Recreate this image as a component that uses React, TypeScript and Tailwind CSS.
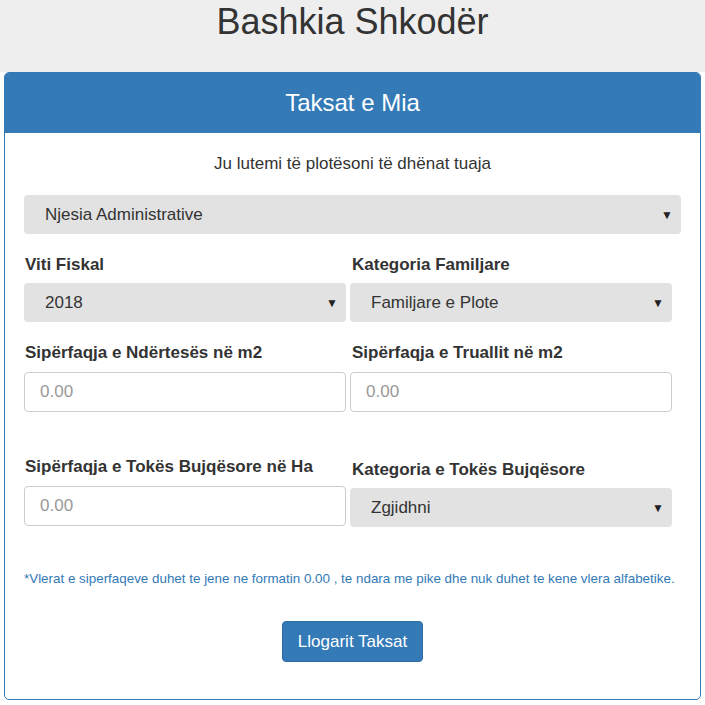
export default function App() {
  const font = { fontFamily: '"Liberation Sans", Arial, sans-serif' };

  const Select = ({ text, wide }: { text: string; wide?: boolean }) => (
    <div
      className={`flex items-center justify-between h-[39px] rounded-[4px] bg-[#e2e2e2] pl-[21px] pr-[8px] text-[17px] text-[#333] ${
        wide ? "w-[657px]" : "w-[322px]"
      }`}
    >
      <span>{text}</span>
      <span className="text-[12px] text-[#222]">▼</span>
    </div>
  );

  const Input = () => (
    <div className="flex items-center h-[40px] w-[322px] rounded-[4px] border border-[#cccccc] bg-white pl-[15px] text-[17px] text-[#999]">
      0.00
    </div>
  );

  const Label = ({ text }: { text: string }) => (
    <div className="text-[17px] font-bold text-[#333] leading-[20px]">{text}</div>
  );

  return (
    <div className="w-[705px] h-[705px] bg-white overflow-hidden" style={font}>
      {/* Header band */}
      <div className="h-[72px] bg-[#eeeeee] flex justify-center">
        <h1 className="text-[36px] leading-[44px] text-[#333]">Bashkia Shkodër</h1>
      </div>

      {/* Card */}
      <div className="ml-[4px] w-[697px] h-[628px] rounded-[5px] border border-[#337ab7] overflow-hidden">
        <div className="h-[60px] bg-[#337ab7] flex items-center justify-center text-white text-[24px]">
          Taksat e Mia
        </div>

        <div className="px-[19px]">
          <p className="mt-[19px] text-center text-[17px] leading-[24px] text-[#333]">
            Ju lutemi të plotësoni të dhënat tuaja
          </p>

          <div className="mt-[19px]">
            <Select text="Njesia Administrative" wide />
          </div>

          <div className="mt-[21px] grid grid-cols-[322px_322px] gap-x-[4px]">
            <div className="pl-[1px]">
              <Label text="Viti Fiskal" />
            </div>
            <div className="pl-[2px]">
              <Label text="Kategoria Familjare" />
            </div>
            <div className="mt-[8px]">
              <Select text="2018" />
            </div>
            <div className="mt-[8px]">
              <Select text="Familjare e Plote" />
            </div>
          </div>

          <div className="mt-[21px] grid grid-cols-[322px_322px] gap-x-[4px]">
            <div className="pl-[1px]">
              <Label text="Sipërfaqja e Ndërtesës në m2" />
            </div>
            <div className="pl-[2px]">
              <Label text="Sipërfaqja e Truallit në m2" />
            </div>
            <div className="mt-[9px]">
              <Input />
            </div>
            <div className="mt-[9px]">
              <Input />
            </div>
          </div>

          <div className="mt-[45px] grid grid-cols-[322px_322px] gap-x-[4px]">
            <div className="flex flex-col">
              <div className="pl-[1px]">
                <Label text="Sipërfaqja e Tokës Bujqësore në Ha" />
              </div>
              <div className="mt-[9px]">
                <Input />
              </div>
            </div>
            <div className="flex flex-col">
              <div className="pl-[2px] mt-[3px]">
                <Label text="Kategoria e Tokës Bujqësore" />
              </div>
              <div className="mt-[8px]">
                <Select text="Zgjidhni" />
              </div>
            </div>
          </div>

          <p className="mt-[44px] text-[13.4px] leading-[16px] text-[#337ab7] whitespace-nowrap">
            *Vlerat e siperfaqeve duhet te jene ne formatin 0.00 , te ndara me pike dhe nuk duhet te kene vlera alfabetike.
          </p>

          <div className="mt-[34px] flex justify-center">
            <button className="h-[41px] w-[141px] rounded-[4px] bg-[#337ab7] border border-[#2e6da4] text-white text-[17px]">
              Llogarit Taksat
            </button>
          </div>
        </div>
      </div>
    </div>
  );
}
